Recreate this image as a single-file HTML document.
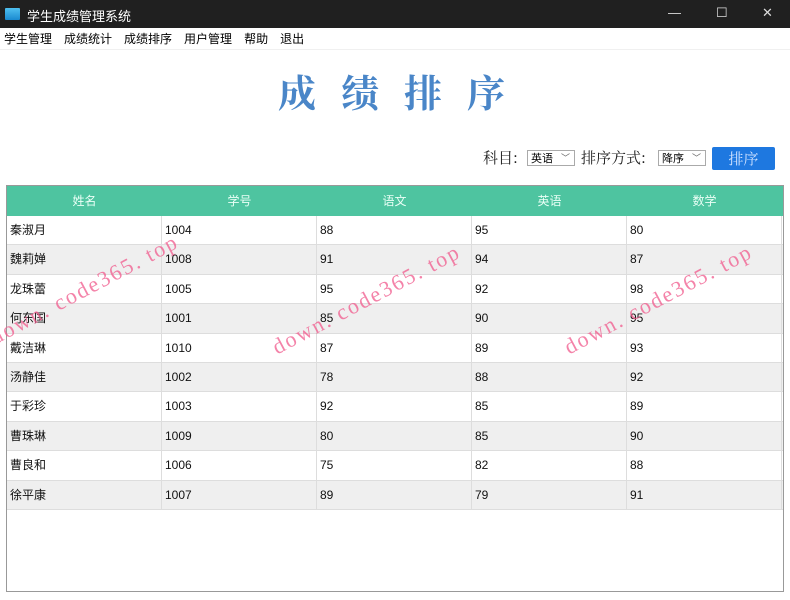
<!DOCTYPE html>
<html><head><meta charset="utf-8"><style>
*{margin:0;padding:0;box-sizing:border-box}
body{width:790px;height:600px;overflow:hidden;background:#fff;font-family:"Liberation Sans","Noto Sans CJK SC",sans-serif;position:relative}
.tb{height:28px;background:#202020;color:#fff;font-size:13px;position:relative}
.tb .ic{position:absolute;left:5px;top:8px;width:15px;height:12px;background:linear-gradient(#4fc0f0,#1a8ad0);border-radius:1px}
.tb .t{position:absolute;left:27px;top:6px}
.tb .c{position:absolute;top:5px;font-size:13px;color:#ddd;font-weight:300}
.mb{height:22px;font-size:12px;color:#000;padding-left:4px;border-bottom:1px solid #f0f0f0}
.mb span{display:inline-block;margin-right:12px;line-height:22px}
h1{position:absolute;left:278px;top:63px;font-family:"Noto Serif CJK SC","Liberation Serif",serif;font-weight:bold;font-size:38px;color:#4a86c8;letter-spacing:25px;white-space:nowrap}
.ctl{position:absolute;top:147px;left:483px;font-family:"Noto Serif CJK SC","Liberation Serif",serif;font-size:15px;color:#222;white-space:nowrap}
.sel{position:absolute;top:150px;height:16px;border:1px solid #aaa;font-size:11px;font-family:"Noto Sans CJK SC",sans-serif;line-height:14px;padding-left:3px;background:#fff}
.sel i{position:absolute;right:4px;top:0;font-style:normal;font-size:9px;color:#666}
.btn{position:absolute;left:712px;top:147px;width:63px;height:23px;background:#1e78e0;color:#cfe2ff;font-family:"Noto Serif CJK SC",serif;font-size:15px;text-align:center;line-height:23px;border-radius:2px}
.tbl{position:absolute;left:6px;top:185px;width:778px;height:407px;border:1px solid #999;background:#fff}
.hd{height:30px;background:#4ec4a0;color:#eafff6;font-size:12px;display:flex}
.hd div{width:155px;text-align:center;line-height:30px}
.r{height:29.4px;display:flex;font-size:12px;color:#111;border-bottom:1px solid #ddd}
.r:nth-child(even){background:#efefef}
.r div{width:155px;padding-left:3px;line-height:29px;border-right:1px solid #ddd}
.wm{position:absolute;font-family:"Liberation Serif",serif;font-size:22px;color:rgba(240,90,140,.75);transform:rotate(-28deg);transform-origin:left bottom;white-space:nowrap;letter-spacing:2px;line-height:26px}
</style></head><body>
<div class="tb"><div class="ic"></div><div class="t">学生成绩管理系统</div>
<div class="c" style="left:668px">—</div><div class="c" style="left:716px">☐</div><div class="c" style="left:762px">✕</div></div>
<div class="mb"><span>学生管理</span><span>成绩统计</span><span>成绩排序</span><span>用户管理</span><span>帮助</span><span>退出</span></div>
<h1>成绩排序</h1>
<div class="ctl">科目:</div>
<div class="sel" style="left:527px;width:48px">英语<i>﹀</i></div>
<div class="ctl" style="left:581px">排序方式:</div>
<div class="sel" style="left:658px;width:48px">降序<i>﹀</i></div>
<div class="btn">排序</div>
<div class="tbl">
<div class="hd"><div>姓名</div><div>学号</div><div>语文</div><div>英语</div><div>数学</div></div>
<div>
<div class="r"><div>秦淑月</div><div>1004</div><div>88</div><div>95</div><div>80</div></div>
<div class="r"><div>魏莉婵</div><div>1008</div><div>91</div><div>94</div><div>87</div></div>
<div class="r"><div>龙珠蕾</div><div>1005</div><div>95</div><div>92</div><div>98</div></div>
<div class="r"><div>何东国</div><div>1001</div><div>85</div><div>90</div><div>95</div></div>
<div class="r"><div>戴洁琳</div><div>1010</div><div>87</div><div>89</div><div>93</div></div>
<div class="r"><div>汤静佳</div><div>1002</div><div>78</div><div>88</div><div>92</div></div>
<div class="r"><div>于彩珍</div><div>1003</div><div>92</div><div>85</div><div>89</div></div>
<div class="r"><div>曹珠琳</div><div>1009</div><div>80</div><div>85</div><div>90</div></div>
<div class="r"><div>曹良和</div><div>1006</div><div>75</div><div>82</div><div>88</div></div>
<div class="r"><div>徐平康</div><div>1007</div><div>89</div><div>79</div><div>91</div></div>
</div></div>
<div class="wm" style="left:-2px;top:324px">down. code365. top</div>
<div class="wm" style="left:280px;top:334px">down. code365. top</div>
<div class="wm" style="left:572px;top:334px">down. code365. top</div>
</body></html>
